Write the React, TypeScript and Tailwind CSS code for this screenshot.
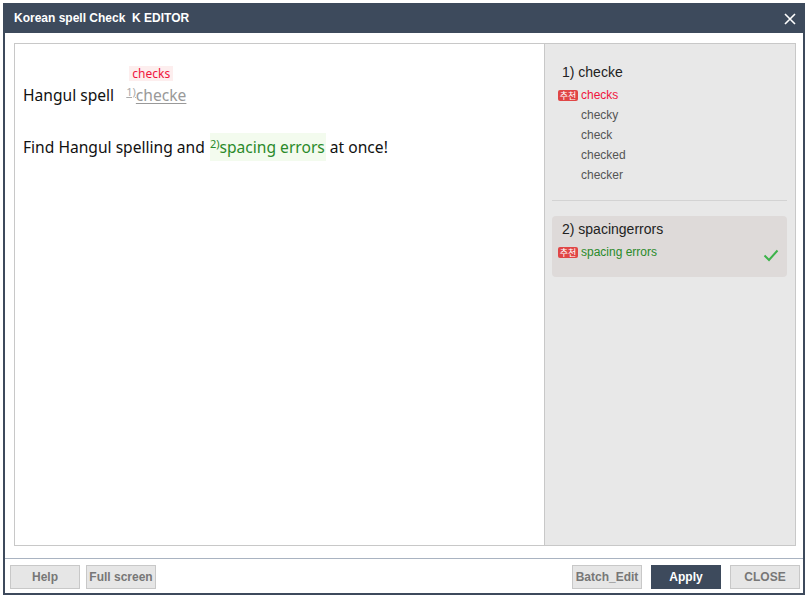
export default function App() {
  const others = ["checky", "check", "checked", "checker"];
  return (
    <div className="w-[805px] h-[597px] bg-white pt-[3px] pl-[3px] font-['Liberation_Sans',Arial,sans-serif]">
      <div className="w-[802px] h-[592px] flex flex-col">
        {/* title bar */}
        <div className="h-[30px] shrink-0 bg-[#3d4a5c] flex items-center justify-between pl-[11px] pr-[9px]">
          <span className="text-white text-[12px] font-bold">Korean spell Check&nbsp;&nbsp;K EDITOR</span>
          <svg width="12" height="12" viewBox="0 0 12 12" className="mt-[1px]">
            <path d="M1 1 L11 11 M11 1 L1 11" stroke="#fff" strokeWidth="1.6" />
          </svg>
        </div>

        <div className="flex-1 flex flex-col border-x-2 border-b-2 border-[#3d4a5c]">
          {/* editor + suggestions */}
          <div className="flex-1 pl-[9px] pr-[7px] pt-[10px] pb-[12px] flex">
            <div className="flex-1 flex border border-[#c8c8c8]">
              <div className="flex-1 bg-white border-r border-[#c8c8c8] pl-[8px] pt-[39px] text-[15.6px] text-[#111] font-['Noto_Sans',sans-serif]">
                <p className="leading-[24px] whitespace-nowrap">
                  Hangul spell&nbsp;&nbsp;
                  <span className="relative inline-block ml-[4px]">
                    <span className="absolute left-[3px] -top-[17px] px-[3px] bg-[#fdeeee] text-[#f0143c] text-[12px] leading-[15px]">checks</span>
                    <sup className="text-[11px] text-[#aaa] underline decoration-[#aaa]">1)</sup>
                    <span className="text-[#999] underline decoration-[#999] underline-offset-2">checke</span>
                  </span>
                </p>
                <p className="mt-[26px] leading-[28px] whitespace-nowrap">
                  Find Hangul spelling and{" "}
                  <span className="inline-block bg-[#f3fbee] text-[#2a8a2a] ml-[1px] pr-[1px]">
                    <sup className="text-[11px]">2)</sup>spacing errors
                  </span>{" "}
                  at once!
                </p>
              </div>

              <div className="w-[250px] bg-[#e8e8e8] pl-[7px] pr-[8px] pt-[18px]">
                <div className="border-b border-[#d3d3d3] pl-[6px] pb-[15px]">
                  <div className="pl-[4px] text-[14px] text-[#222] leading-[20px]">1) checke</div>
                  <div className="mt-[3px] flex items-center leading-[20px] text-[12px]">
                    <span className="w-[20px] h-[11px] rounded-[2px] bg-[#e04646] text-white text-[9px] leading-[11px] text-center font-['Noto_Sans_CJK_KR',sans-serif] mr-[3px]">추천</span>
                    <span className="text-[#f0143c]">checks</span>
                  </div>
                  {others.map((o) => (
                    <div key={o} className="pl-[23px] text-[12px] text-[#555] leading-[20px]">
                      {o}
                    </div>
                  ))}
                </div>

                <div className="mt-[15px] bg-[#dedad9] rounded-[4px] pl-[6px] pr-[8px] pt-[3px] h-[61px]">
                  <div className="pl-[4px] text-[14px] text-[#222] leading-[20px]">2) spacingerrors</div>
                  <div className="mt-[3px] flex items-center leading-[20px] text-[12px]">
                    <span className="w-[20px] h-[11px] rounded-[2px] bg-[#e04646] text-white text-[9px] leading-[11px] text-center font-['Noto_Sans_CJK_KR',sans-serif] mr-[3px]">추천</span>
                    <span className="text-[#2a8a2a] flex-1">spacing errors</span>
                    <svg width="16" height="13" viewBox="0 0 16 13" className="mt-[6px]">
                      <path d="M1.5 6.5 L6 11 L14.5 1.5" fill="none" stroke="#3cb34a" strokeWidth="2" />
                    </svg>
                  </div>
                </div>
              </div>
            </div>
          </div>

          {/* footer */}
          <div className="h-[35px] shrink-0 border-t border-[#a9b3c1] flex items-center justify-between pl-[5px] pr-[3px] pt-[2px]">
            <div className="flex gap-[6px]">
              <button className="w-[70px] h-[24px] bg-[#e6e6e6] border border-[#c8c8c8] text-[12px] font-bold text-[#777]">Help</button>
              <button className="w-[70px] h-[24px] bg-[#e6e6e6] border border-[#c8c8c8] text-[12px] font-bold text-[#777]">Full screen</button>
            </div>
            <div className="flex">
              <button className="w-[70px] h-[24px] bg-[#e6e6e6] border border-[#c8c8c8] text-[12px] font-bold text-[#777]">Batch_Edit</button>
              <button className="ml-[9px] w-[70px] h-[24px] bg-[#3d4a5c] text-[12px] font-bold text-white">Apply</button>
              <button className="ml-[9px] w-[70px] h-[24px] bg-[#e6e6e6] border border-[#c8c8c8] text-[12px] font-bold text-[#777]">CLOSE</button>
            </div>
          </div>
        </div>
      </div>
    </div>
  );
}
